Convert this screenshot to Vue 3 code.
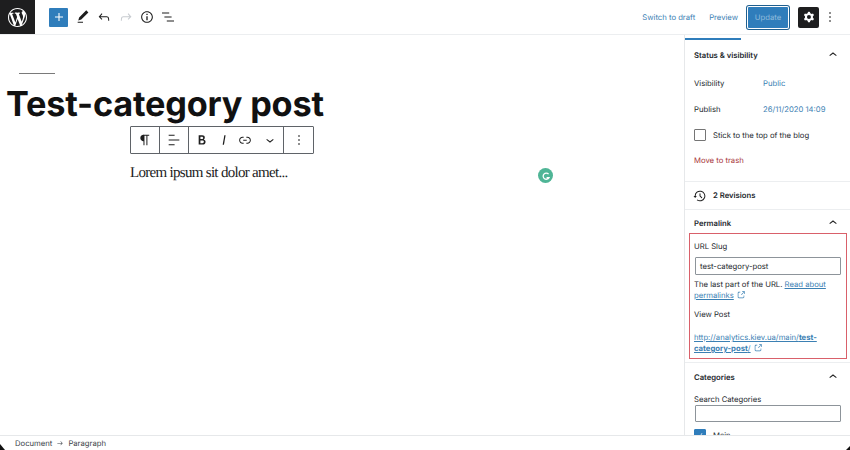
<script setup>
const P = {
  plus: 'M18 11.2h-5.2V6h-1.6v5.2H6v1.6h5.2V18h1.6v-5.2H18z',
  edit: 'M20.1 5.1L16.9 2 6.2 12.7l-1.3 4.4 4.5-1.3L20.1 5.1zM4 20.8h8v-1.5H4v1.5z',
  undo: 'M18.3 11.7c-.6-.6-1.4-.9-2.3-.9H6.7l2.9-3.3-1.1-1-4.5 5L8.5 16l1-1-2.7-2.7H16c.5 0 .9.2 1.3.5 1 1 1 3.4 1 4.5v.3h1.5v-.2c0-1.5 0-4.3-1.5-5.7z',
  redo: 'M15.6 6.5l-1.1 1 2.9 3.3H8c-.9 0-1.7.3-2.3.9-1.4 1.5-1.4 4.2-1.4 5.6v.2h1.5v-.3c0-1.1 0-3.5 1-4.5.3-.3.7-.5 1.3-.5h9.2L14.5 15l1.1 1.1 4.6-4.6-4.6-5z',
  info: 'M12 3.2c-4.8 0-8.8 3.9-8.8 8.8 0 4.8 3.9 8.8 8.8 8.8 4.8 0 8.8-3.9 8.8-8.8 0-4.8-4-8.8-8.8-8.8zm0 16c-4 0-7.2-3.3-7.2-7.2C4.8 8 8 4.8 12 4.8s7.2 3.3 7.2 7.2c0 4-3.2 7.2-7.2 7.2zM11 17h2v-6h-2v6zm0-8h2V7h-2v2z',
  list: 'M13.8 5.2H3v1.5h10.8V5.2zm-3.6 12v1.5H21v-1.5H10.2zm7.2-6H6.6v1.5h10.8v-1.5z',
  cog: 'M10.289 4.836A1 1 0 0111.275 4h1.306a1 1 0 01.987.836l.244 1.466c.787.26 1.503.679 2.108 1.218l1.393-.522a1 1 0 011.216.437l.653 1.13a1 1 0 01-.23 1.273l-1.148.944a6.025 6.025 0 010 2.435l1.149.946a1 1 0 01.23 1.272l-.653 1.13a1 1 0 01-1.216.437l-1.394-.522c-.605.54-1.32.958-2.108 1.218l-.244 1.466a1 1 0 01-.987.836h-1.306a1 1 0 01-.986-.836l-.244-1.466a5.995 5.995 0 01-2.108-1.218l-1.394.522a1 1 0 01-1.217-.436l-.653-1.131a1 1 0 01.23-1.272l1.149-.946a6.026 6.026 0 010-2.435l-1.148-.944a1 1 0 01-.23-1.272l.653-1.131a1 1 0 011.217-.437l1.393.522a5.994 5.994 0 012.108-1.218l.244-1.466zM14.929 12a3 3 0 11-6 0 3 3 0 016 0z',
  more: 'M13 19h-2v-2h2v2zm0-6h-2v-2h2v2zm0-6h-2V5h2v2z',
  up: 'M6.5 12.4L12 8l5.5 4.4-.9 1.2L12 10l-4.5 3.6-1-1.2z',
  down: 'M17.5 11.6L12 16l-5.5-4.4.9-1.2L12 14l4.5-3.6 1 1.2z',
  para: 'M18.3 4H9.9v-.1l-.9.2c-2.3.4-4 2.4-4 4.8s1.7 4.4 4 4.8l.7.1V20h1.5V5.5h2.9V20h1.5V5.5h2.7V4z',
  align: 'M4 19.8h8.9v-1.5H4v1.5zm8.9-15.6H4v1.5h8.9V4.2zm-8.9 7v1.5h16v-1.5H4z',
  bold: 'M14.7 11.3c1-.6 1.5-1.6 1.5-3 0-2.3-1.3-3.4-4-3.4H7v14h5.8c1.4 0 2.5-.3 3.3-1 .8-.7 1.2-1.7 1.2-2.9.1-1.9-.8-3.1-2.6-3.7zm-5.1-4h2.3c.6 0 1.1.1 1.4.4.3.3.5.7.5 1.2s-.2 1-.5 1.2c-.3.3-.8.4-1.4.4H9.6V7.3zm4.6 9c-.4.3-1 .4-1.7.4H9.6v-3.9h2.9c.7 0 1.3.2 1.7.5.4.3.6.8.6 1.5s-.2 1.2-.6 1.5z',
  italic: 'M12.5 5L10 19h1.9l2.5-14z',
  link: 'M15.6 7.2H14v1.5h1.6c2 0 3.7 1.7 3.7 3.7s-1.7 3.7-3.7 3.7H14v1.5h1.6c2.8 0 5.2-2.3 5.2-5.2 0-2.9-2.3-5.2-5.2-5.2zM4.7 12.4c0-2 1.7-3.7 3.7-3.7H10V7.2H8.4c-2.9 0-5.2 2.3-5.2 5.2 0 2.9 2.3 5.2 5.2 5.2H10v-1.5H8.4c-2 0-3.7-1.7-3.7-3.7zm4.6.9h5.3v-1.5H9.3v1.5z',
  ext: 'M18.2 17c0 .7-.6 1.2-1.2 1.2H7c-.7 0-1.2-.6-1.2-1.2V7c0-.7.6-1.2 1.2-1.2h3.2V4.2H7C5.5 4.2 4.2 5.5 4.2 7v10c0 1.5 1.2 2.8 2.8 2.8h10c1.5 0 2.8-1.2 2.8-2.8v-3.6h-1.5V17zM14.9 3v1.5h3.7l-6.4 6.4 1.1 1.1 6.4-6.4v3.7h1.5V3h-6.3z',
  backup: 'M5.5 12h1.75l-2.5 3-2.5-3H4a8 8 0 113.134 6.35l.907-1.194A6.5 6.5 0 105.5 12zm9.53 1.97l-2.28-2.28V8.5a.75.75 0 00-1.5 0V12c0 .2.08.39.22.53l2.5 2.5a.75.75 0 101.06-1.06z',
  arrow: 'M14.3 6.7l-1.1 1.1 4 4.2H4v1.5h13.3l-4.1 4.4 1.1 1.1 5.8-6.3z',
  check: 'M16.7 7.1l-6.3 8.5-3.3-2.5-.9 1.2 4.5 3.4L17.9 7.9z',
  wp: 'M20 10c0-5.51-4.49-10-10-10C4.48 0 0 4.49 0 10c0 5.52 4.48 10 10 10 5.51 0 10-4.48 10-10zM7.78 15.37L4.37 6.22c.55-.02 1.17-.08 1.17-.08.5-.06.44-1.13-.06-1.11 0 0-1.45.11-2.37.11-.18 0-.37 0-.58-.01C4.12 2.69 6.87 1.11 10 1.11c2.33 0 4.45.87 6.05 2.34-.68-.11-1.65.39-1.65 1.58 0 .74.45 1.36.9 2.1.35.61.55 1.36.55 2.46 0 1.49-1.4 5-1.4 5l-3.03-8.37c.54-.02.82-.17.82-.17.5-.05.44-1.25-.06-1.22 0 0-1.44.12-2.38.12-.87 0-2.33-.12-2.33-.12-.5-.03-.56 1.2-.06 1.22l.92.08 1.26 3.41zM17.41 10c.24-.64.74-1.87.43-4.25.7 1.29 1.05 2.71 1.05 4.25 0 3.29-1.73 6.24-4.4 7.78.97-2.59 1.94-5.2 2.92-7.78zM6.1 18.09C3.12 16.65 1.11 13.53 1.11 10c0-1.3.23-2.48.72-3.59C3.25 10.3 4.67 14.2 6.1 18.09zm4.03-6.63l2.58 6.98c-.86.29-1.76.45-2.71.45-.79 0-1.57-.11-2.29-.33.81-2.38 1.62-4.74 2.42-7.1z'
}
</script>

<template>
  <div class="app">
    <header class="top">
      <div class="logo"><svg width="19" height="19" viewBox="0 0 20 20"><path fill="#fff" :d="P.wp" /></svg></div>
      <div class="tools">
        <span class="plus"><svg width="16" height="16" viewBox="0 0 24 24"><path fill="#fff" :d="P.plus" /></svg></span>
        <svg class="tool" width="16" height="16" viewBox="0 0 24 24"><path :d="P.edit" /></svg>
        <svg class="tool" width="16" height="16" viewBox="0 0 24 24"><path :d="P.undo" /></svg>
        <svg class="tool off" width="16" height="16" viewBox="0 0 24 24"><path :d="P.redo" /></svg>
        <svg class="tool" width="16" height="16" viewBox="0 0 24 24"><path :d="P.info" /></svg>
        <svg class="tool" width="16" height="16" viewBox="0 0 24 24"><path :d="P.list" /></svg>
      </div>
      <div class="actions">
        <a class="act draft">Switch to draft</a>
        <a class="act preview">Preview</a>
        <span class="update">Update</span>
        <span class="gear"><svg width="16" height="16" viewBox="0 0 24 24"><path fill="#fff" fill-rule="evenodd" :d="P.cog" /></svg></span>
        <svg class="tool dots" width="16" height="16" viewBox="0 0 24 24"><path :d="P.more" /></svg>
      </div>
    </header>

    <div class="body">
      <main class="editor">
        <div class="sep"></div>
        <h1 class="title">Test-category post</h1>
        <p class="para">Lorem ipsum sit dolor amet...</p>
        <div class="blocktb">
          <span class="cell c1"><svg width="16" height="16" viewBox="0 0 24 24"><path :d="P.para" /></svg></span>
          <span class="cell c2"><svg width="16" height="16" viewBox="0 0 24 24"><path :d="P.align" /></svg></span>
          <span class="cell c3">
            <svg width="16" height="16" viewBox="0 0 24 24"><path :d="P.bold" /></svg>
            <svg width="16" height="16" viewBox="0 0 24 24"><path :d="P.italic" /></svg>
            <svg width="16" height="16" viewBox="0 0 24 24"><path :d="P.link" /></svg>
            <svg class="chev" width="16" height="16" viewBox="0 0 24 24"><path :d="P.down" /></svg>
          </span>
          <span class="cell c4"><svg width="16" height="16" viewBox="0 0 24 24"><path :d="P.more" /></svg></span>
        </div>
        <span class="gram"><svg width="10" height="10" viewBox="0 0 10 10"><path d="M7.6 3.1A3.1 3.1 0 1 0 8 6.6H5.6" fill="none" stroke="#fff" stroke-width="1.3" /></svg></span>
      </main>

      <aside class="side">
        <div class="tabs"><span class="tabline"></span></div>

        <section class="panel status">
          <div class="phead"><span>Status &amp; visibility</span><svg width="16" height="16" viewBox="0 0 24 24"><path :d="P.up" /></svg></div>
          <div class="row r1"><span class="rl">Visibility</span><a class="rv">Public</a></div>
          <div class="row r2"><span class="rl">Publish</span><a class="rv">26/11/2020 14:09</a></div>
          <label class="chk"><span class="box"></span><span>Stick to the top of the blog</span></label>
          <a class="trash">Move to trash</a>
        </section>

        <section class="panel rev">
          <svg width="16" height="16" viewBox="0 0 24 24"><path :d="P.backup" /></svg>
          <span>2 Revisions</span>
        </section>

        <section class="panel perma">
          <div class="phead"><span>Permalink</span><svg width="16" height="16" viewBox="0 0 24 24"><path :d="P.up" /></svg></div>
          <div class="redbox">
            <div class="lab">URL Slug</div>
            <div class="inp">test-category-post</div>
            <p class="txt">The last part of the URL. <a class="lnk">Read about</a><br /><a class="lnk">permalinks</a> <svg class="ex" width="10" height="10" viewBox="0 0 24 24"><path :d="P.ext" /></svg></p>
            <div class="lab view">View Post</div>
            <p class="url"><a class="lnk">http://analytics.kiev.ua/main/<b>test-</b></a><br /><a class="lnk"><b>category-post</b>/</a> <svg class="ex" width="10" height="10" viewBox="0 0 24 24"><path :d="P.ext" /></svg></p>
          </div>
        </section>

        <section class="panel cats">
          <div class="phead"><span>Categories</span><svg width="16" height="16" viewBox="0 0 24 24"><path :d="P.up" /></svg></div>
          <div class="lab search">Search Categories</div>
          <div class="inp empty"></div>
          <label class="chk main"><span class="box on"><svg width="12" height="12" viewBox="0 0 24 24"><path fill="#fff" :d="P.check" /></svg></span><span>Main</span></label>
        </section>
      </aside>
    </div>

    <footer class="foot">
      <span>Document</span>
      <svg width="8" height="8" viewBox="0 0 24 24"><path :d="P.arrow" /></svg>
      <span>Paragraph</span>
    </footer>
    <span class="corner left"></span>
    <span class="corner right"></span>
  </div>
</template>

<style>
html, body { margin: 0; overflow: hidden; background: #fff; }
</style>

<style scoped>
.app {
  position: relative;
  width: 850px;
  height: 450px;
  display: flex;
  flex-direction: column;
  overflow: hidden;
  background: #fff;
  color: #24282d;
  font-family: Inter, "Liberation Sans", sans-serif;
  font-size: 7.7px;
  line-height: 11px;
  text-rendering: geometricPrecision;
}
a { color: #3b80b3; }
p { margin: 0; }

.top { height: 34px; flex: none; display: flex; align-items: center; border-bottom: 1px solid #eceef0; }
.logo { width: 35px; height: 34px; background: #1e1e1f; display: flex; align-items: center; justify-content: center; }
.tools { display: flex; align-items: center; margin-left: 14px; }
.plus { width: 19px; height: 19px; background: #2f7dbb; border-radius: 1px; display: flex; align-items: center; justify-content: center; margin-right: 7px; }
.tool { fill: #1e1e1e; margin-right: 5.3px; }
.tool.off { fill: #c7cbd0; }
.actions { margin-left: auto; display: flex; align-items: center; }
.act { color: #3b80b3; }
.draft { margin-right: 14px; }
.preview { margin-right: 9px; }
.update {
  width: 42px; height: 23px; background: #2f7dbb; color: #8fbcdc; border-radius: 2px;
  display: flex; align-items: center; justify-content: center;
  box-shadow: 0 0 0 1px #fff inset, 0 0 0 1px #1f5f8f;
  margin-right: 9px;
}
.gear { width: 21px; height: 21px; background: #1e1e1f; border-radius: 2px; display: flex; align-items: center; justify-content: center; margin-right: 3px; }
.tool.dots { margin-right: 12px; }

.body { flex: 1; min-height: 0; display: flex; }
.editor { position: relative; flex: 1; min-width: 0; }
.sep { width: 36px; height: 1px; background: #7a7a7a; margin: 38px 0 0 19px; }
.title {
  margin: 8px 0 0 6px;
  font-size: 34.3px; line-height: 46px; font-weight: 700; color: #111; letter-spacing: -0.2px;
}
.para {
  margin: 33px 0 0 130px;
  font-family: "Liberation Serif", serif; font-size: 15px; line-height: 24px; color: #1c1c1c; letter-spacing: -0.7px;
}
.blocktb {
  position: absolute; left: 130px; top: 91px; height: 28px; display: flex;
  border: 1px solid #5f6368; border-radius: 1px; background: #fff; box-sizing: border-box;
}
.cell { display: flex; align-items: center; justify-content: center; border-right: 1px solid #5f6368; fill: #1e1e1e; }
.cell:last-child { border-right: 0; }
.c1 { width: 28px; }
.c2 { width: 28px; }
.c3 { width: 95px; gap: 5.5px; justify-content: flex-start; padding-left: 5px; box-sizing: border-box; }
.chev { margin-left: 3px; }
.c4 { width: 29px; }
.gram {
  position: absolute; left: 538px; top: 133px; width: 15px; height: 15px; border-radius: 50%;
  background: #4fb596; display: flex; align-items: center; justify-content: center;
}

.side { width: 166px; flex: none; border-left: 1px solid #e6e8ea; box-sizing: border-box; overflow: hidden; }
.tabs { height: 6px; padding-top: 3px; box-sizing: border-box; }
.tabline { display: block; width: 56px; height: 2px; background: #2f7dbb; }
.panel { padding: 0 10px 0 9px; border-bottom: 1px solid #eceef0; }
.phead { display: flex; align-items: center; justify-content: space-between; font-weight: 600; color: #24282d; height: 16px; }
.phead svg { fill: #1e1e1e; margin-right: -1px; }
.status { height: 141px; padding-top: 6px; box-sizing: border-box; }
.row { display: flex; align-items: center; }
.r1 { margin-top: 15px; }
.r2 { margin-top: 15px; }
.rl { width: 69px; }
.chk { display: flex; align-items: center; gap: 7px; }
.status .chk { margin-top: 14px; }
.box { width: 12px; height: 12px; border: 1px solid #757575; border-radius: 1px; box-sizing: border-box; display: flex; align-items: center; justify-content: center; flex: none; }
.box.on { background: #2f7dbb; border-color: #2f7dbb; }
.trash { display: block; margin-top: 14px; color: #a8353a; }
.rev { height: 28px; box-sizing: border-box; display: flex; align-items: center; gap: 5px; font-weight: 600; padding-left: 7px; fill: #1e1e1e; }
.perma { padding: 5px 0 0 4px; height: 153px; box-sizing: border-box; }
.perma .phead { padding: 0 10px 0 5px; }
.redbox {
  width: 158px; height: 126px; margin-top: 2px; box-sizing: border-box;
  border: 1px solid #d9606a; padding: 7px 5px 7px 4px;
}
.inp {
  height: 18px; border: 1px solid #8d949a; border-radius: 1px; box-sizing: border-box;
  display: flex; align-items: center; padding-left: 4px; margin: 5px 0 0 1px;
}
.txt { margin-top: 4px; }
.view { margin-top: 8px; }
.url { margin-top: 12px; }
.lnk { text-decoration: underline; color: #3b80b3; }
.ex { fill: #3b80b3; vertical-align: -2px; }
.cats { padding-top: 6px; border-bottom: 0; }
.search { margin-top: 9px; }
.cats .inp { margin: 0 -1px 0 1px; height: 17px; }
.main { margin-top: 7px; }

.foot { height: 15px; flex: none; background: #fff; border-top: 1px solid #e6e8ea; display: flex; align-items: center; gap: 4px; padding-left: 15px; box-sizing: border-box; color: #3c434a; position: relative; }
.foot svg { fill: #3c434a; }
.corner { position: absolute; bottom: 0; width: 0; height: 0; border-style: solid; }
.corner.left { left: 0; border-width: 6px 0 0 5px; border-color: transparent transparent transparent #111; }
.corner.right { right: 0; border-width: 0 0 4px 4px; border-color: transparent transparent #111 transparent; }
</style>
